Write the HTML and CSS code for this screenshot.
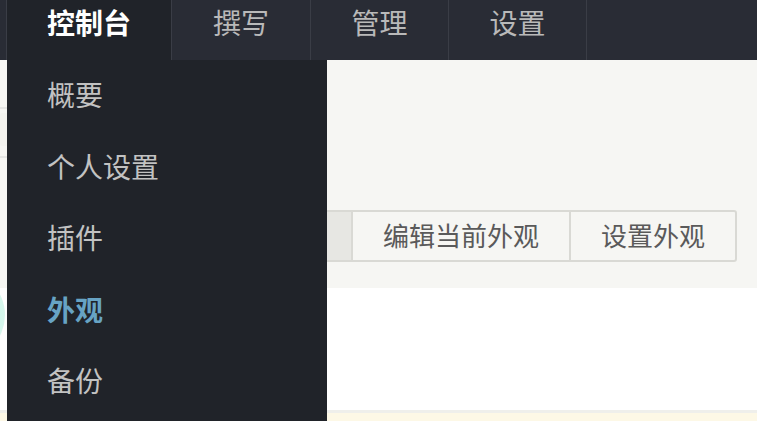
FILE: index.html
```html
<!DOCTYPE html>
<html lang="zh-CN">
<head>
<meta charset="utf-8">
<title>外观</title>
<link rel="stylesheet" href="styles.css">
</head>
<body>
<nav class="navbar">
  <a class="tab tab-active">控制台</a>
  <a class="tab tab-wide">撰写</a>
  <a class="tab">管理</a>
  <a class="tab">设置</a>
</nav>
<main class="page">
  <section class="page-head">
    <div class="btn-group">
      <a class="btn btn-current">可以使用的外观</a>
      <a class="btn">编辑当前外观</a>
      <a class="btn">设置外观</a>
    </div>
  </section>
  <section class="page-body"></section>
  <div class="page-rule"></div>
  <div class="page-notice"></div>
</main>
<div class="ghost-box"><div class="ghost-fill"></div></div>
<div class="ghost-circle"></div>
<ul class="dropdown">
  <li class="menu-item">概要</li>
  <li class="menu-item">个人设置</li>
  <li class="menu-item">插件</li>
  <li class="menu-item menu-active">外观</li>
  <li class="menu-item">备份</li>
</ul>
</body>
</html>
```
FILE: styles.css
```css
html, body {
  margin: 0;
  padding: 0;
  height: 100%;
  overflow: hidden;
}
body {
  background: #f6f6f3;
  font-family: "Noto Sans CJK SC", "Noto Sans", sans-serif;
  position: relative;
}
.navbar {
  height: 60px;
  background: #292c35;
  display: flex;
  padding-left: 6px;
  box-sizing: border-box;
}
.tab {
  display: block;
  height: 60px;
  line-height: 44px;
  padding: 0 40.5px;
  font-size: 28px;
  color: #b9b9b9;
  border-right: 1px solid #3a3d46;
  text-decoration: none;
  white-space: nowrap;
}
.tab-wide {
  padding: 0 41px;
}
.tab-active {
  width: 84px;
  padding: 0 40px;
  background: #202329;
  color: #ffffff;
  font-weight: 700;
  border-left: 1px solid #3a3d46;
}
.page {
  display: flex;
  flex-direction: column;
}
.page-head {
  background: #f6f6f3;
  padding: 150px 20px 26px 0;
  display: flex;
  justify-content: flex-end;
}
.btn-group {
  display: flex;
}
.btn {
  display: block;
  height: 48px;
  line-height: 46px;
  padding: 0 30px;
  font-size: 26px;
  color: #5a5a5a;
  background: #f6f6f3;
  border: 2px solid #d9d9d4;
  margin-left: -2px;
  white-space: nowrap;
}
.btn:first-child {
  border-radius: 3px 0 0 3px;
}
.btn:last-child {
  border-radius: 0 3px 3px 0;
}
.btn-current {
  background: #e7e7e3;
}
.page-body {
  background: #ffffff;
  height: 122px;
}
.page-rule {
  height: 3px;
  background: #efefeb;
}
.page-notice {
  height: 40px;
  background: #fdf8e6;
}
.ghost-box {
  position: absolute;
  left: -12px;
  top: 107px;
  width: 38px;
  height: 47px;
  border: 2px solid rgba(150, 150, 150, 0.16);
  border-radius: 4px;
}
.ghost-fill {
  margin: 4px 0 0 10px;
  width: 18px;
  height: 33px;
  border-radius: 3px;
  background: rgba(220, 220, 215, 0.12);
}
.ghost-circle {
  position: absolute;
  left: -85px;
  top: 270px;
  width: 90px;
  height: 90px;
  border-radius: 50%;
  background: radial-gradient(circle at 50% 50%, #c6f6e6 0%, #d2f7ec 60%, #e6f6ef 100%);
}
.dropdown {
  position: absolute;
  left: 7px;
  top: 60px;
  width: 320px;
  height: 380px;
  margin: 0;
  padding: 0;
  list-style: none;
  background: #202329;
}
.menu-item {
  height: 71.5px;
  line-height: 68px;
  padding-left: 40px;
  font-size: 28px;
  color: #c2c2c2;
}
.menu-active {
  color: #67a3c4;
  font-weight: 700;
}
```
